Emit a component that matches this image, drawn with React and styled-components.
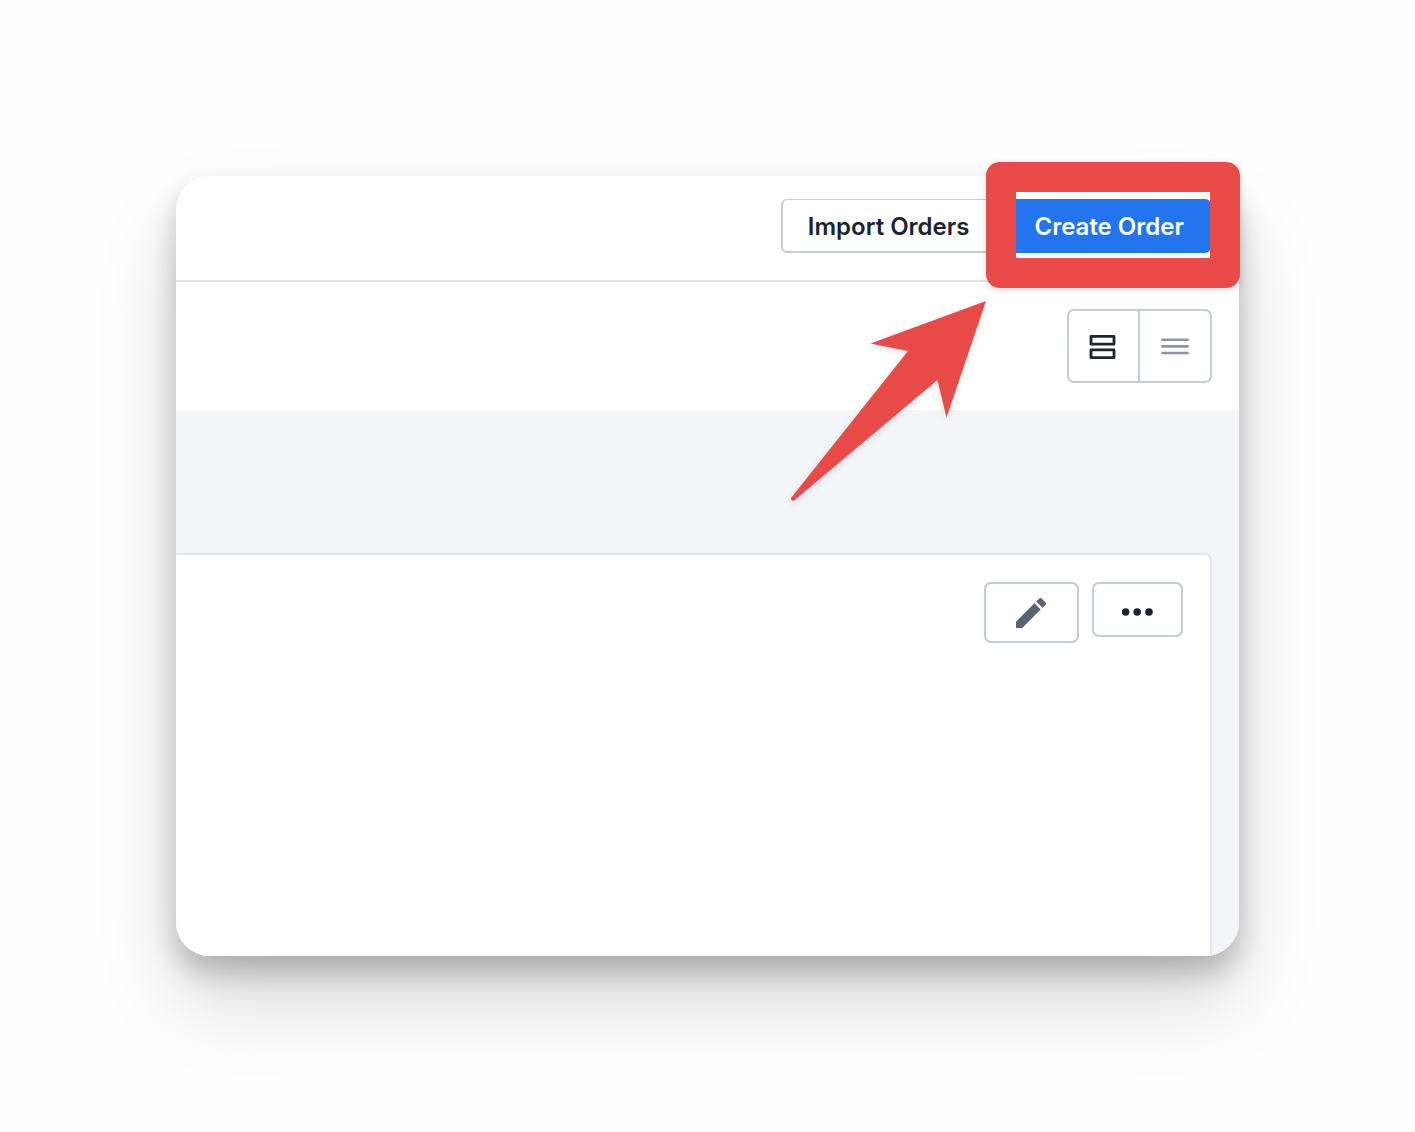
import React, { useState } from 'react';
import styled, { createGlobalStyle, css } from 'styled-components';
import { MdEdit } from 'react-icons/md';

const colors = {
    ink: '#1b2434',
    muted: '#9095a3',
    icon: '#5c6370',
    border: '#c3cdd7',
    divider: '#e1e6ea',
    canvas: '#f3f5f9',
    primary: '#2275ee',
    marker: '#e84b47',
};

const GlobalStyle = createGlobalStyle`
    * {
        box-sizing: border-box;
    }

    body {
        margin: 0;
        background: #fefefe;
        font-family: Inter, 'Liberation Sans', sans-serif;
        color: ${colors.ink};
    }
`;

const Page = styled.main`
    padding: 176px;
`;

const Stage = styled.div`
    position: relative;
`;

const Card = styled.section`
    overflow: hidden;
    border-radius: 34px;
    background: #fff;
    box-shadow:
        0 16px 28px rgba(0, 0, 0, 0.22),
        0 46px 80px rgba(0, 0, 0, 0.15);
`;

const Header = styled.header`
    display: flex;
    justify-content: flex-end;
    gap: 11px;
    padding: 23px 28px 27px;
    border-bottom: 2px solid ${colors.divider};
`;

const Button = styled.button`
    height: 54px;
    padding: 2px 25px 0;
    border: 2px solid ${colors.border};
    border-top-width: 1px;
    border-radius: 6px;
    background: #fff;
    color: ${colors.ink};
    font-family: inherit;
    font-size: 24px;
    font-weight: 600;
    line-height: 32px;
    white-space: nowrap;
    cursor: pointer;

    ${(props) =>
        props.$primary &&
        css`
            border-color: ${colors.primary};
            background: ${colors.primary};
            color: #fff;
        `}
`;

const FilterBar = styled.div`
    display: flex;
    justify-content: flex-end;
    padding: 27px;
`;

const ViewToggle = styled.div`
    display: grid;
    grid-template-columns: 69px 72px;
    height: 74px;
    border: 2px solid ${colors.border};
    border-radius: 7px;
`;

const ViewButton = styled.button`
    display: flex;
    align-items: center;
    justify-content: center;
    padding: 0;
    border: 0;
    background: none;
    color: ${(props) => (props.$active ? colors.ink : colors.muted)};
    cursor: pointer;

    & + & {
        border-left: 2px solid ${colors.border};
    }
`;

const Body = styled.div`
    padding: 143px 27px 0 0;
    background: ${colors.canvas};
`;

const Panel = styled.div`
    display: flex;
    align-items: flex-start;
    justify-content: flex-end;
    gap: 13px;
    min-height: 403px;
    padding: 27px;
    border: 2px solid ${colors.divider};
    border-width: 2px 2px 0 0;
    border-top-right-radius: 7px;
    background: #fff;
`;

const IconButton = styled.button`
    display: flex;
    align-items: center;
    justify-content: center;
    width: ${(props) => (props.$compact ? 91 : 95)}px;
    height: ${(props) => (props.$compact ? 55 : 61)}px;
    padding: ${(props) => (props.$compact ? '4px 0 0' : '0 1px 0 0')};
    border: 2px solid ${colors.border};
    border-radius: 7px;
    background: #fff;
    color: ${(props) => (props.$compact ? colors.ink : colors.icon)};
    cursor: pointer;
`;

const Highlight = styled.div`
    position: absolute;
    top: -14px;
    right: -1px;
    width: 254px;
    height: 126px;
    border: 30px solid ${colors.marker};
    border-radius: 14px;
    box-shadow: 0 2px 6px rgba(0, 0, 0, 0.16);
    pointer-events: none;
`;

const Arrow = styled.svg`
    position: absolute;
    top: 114px;
    right: 249px;
    overflow: visible;
    filter: drop-shadow(0 2px 3px rgba(0, 0, 0, 0.12));
    pointer-events: none;
`;

const ComfortableIcon = () => (
    <svg width="30" height="30" viewBox="0 0 30 30" fill="none" stroke="currentColor" strokeWidth="2.8" strokeLinejoin="round">
        <rect x="2" y="5.4" width="23" height="7.8" />
        <rect x="2" y="18.8" width="23" height="7.8" />
    </svg>
);

const CompactIcon = () => (
    <svg width="30" height="30" viewBox="0 0 30 30" fill="none" stroke="currentColor" strokeWidth="2.6">
        <path d="M1.3 8.7h27.4M1.3 15.4h27.4M1.3 22h27.4" />
    </svg>
);

const DotsIcon = () => (
    <svg width="31" height="8" viewBox="0 0 31 8" fill="currentColor">
        <circle cx="3.6" cy="4" r="3.8" />
        <circle cx="15.2" cy="4" r="3.8" />
        <circle cx="27" cy="4" r="3.8" />
    </svg>
);

export default () => {
    const [view, setView] = useState('comfortable');

    return (
        <>
            <GlobalStyle />
            <Page>
                <Stage>
                    <Card>
                        <Header>
                            <Button type="button">Import Orders</Button>
                            <Button type="button" $primary>
                                Create Order
                            </Button>
                        </Header>
                        <FilterBar>
                            <ViewToggle role="group" aria-label="View">
                                <ViewButton
                                    type="button"
                                    aria-label="Comfortable view"
                                    aria-pressed={view === 'comfortable'}
                                    $active={view === 'comfortable'}
                                    onClick={() => setView('comfortable')}
                                >
                                    <ComfortableIcon />
                                </ViewButton>
                                <ViewButton
                                    type="button"
                                    aria-label="Compact view"
                                    aria-pressed={view === 'compact'}
                                    $active={view === 'compact'}
                                    onClick={() => setView('compact')}
                                >
                                    <CompactIcon />
                                </ViewButton>
                            </ViewToggle>
                        </FilterBar>
                        <Body>
                            <Panel>
                                <IconButton type="button" aria-label="Edit">
                                    <MdEdit size={40} />
                                </IconButton>
                                <IconButton
                                    type="button"
                                    aria-label="More actions"
                                    $compact
                                >
                                    <DotsIcon />
                                </IconButton>
                            </Panel>
                        </Body>
                    </Card>
                    <Highlight />
                    <Arrow
                        width="210"
                        height="220"
                        viewBox="780 290 210 220"
                        fill={colors.marker}
                        aria-hidden="true"
                    >
                        <path d="M986 301L870.5 343.5L908 351L791.2 497.8Q790.6 499 791.6 500Q793 501.4 794.4 500.2L937.5 380L946.5 417.5Z" />
                    </Arrow>
                </Stage>
            </Page>
        </>
    );
};
